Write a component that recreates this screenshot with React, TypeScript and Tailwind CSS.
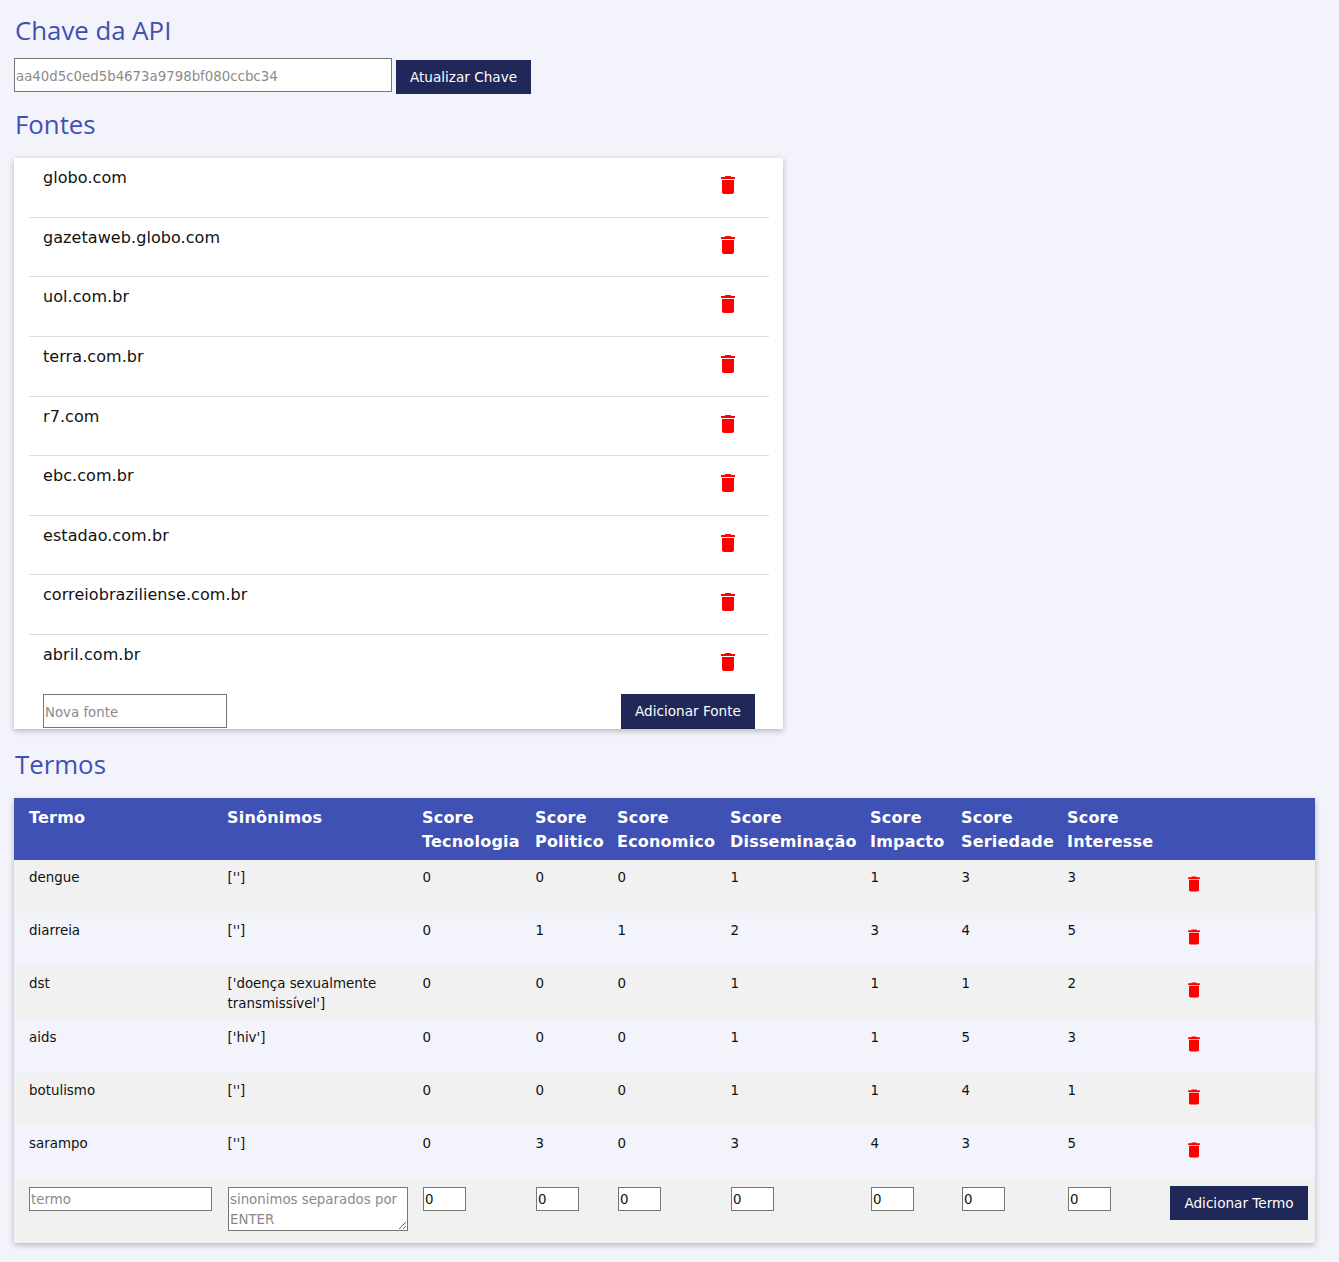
import { MdDelete } from "react-icons/md";

const fontes = [
  "globo.com",
  "gazetaweb.globo.com",
  "uol.com.br",
  "terra.com.br",
  "r7.com",
  "ebc.com.br",
  "estadao.com.br",
  "correiobraziliense.com.br",
  "abril.com.br",
];

const termos: [string, string, number, number, number, number, number, number, number][] = [
  ["dengue", "['']", 0, 0, 0, 1, 1, 3, 3],
  ["diarreia", "['']", 0, 1, 1, 2, 3, 4, 5],
  ["dst", "['doença sexualmente transmissível']", 0, 0, 0, 1, 1, 1, 2],
  ["aids", "['hiv']", 0, 0, 0, 1, 1, 5, 3],
  ["botulismo", "['']", 0, 0, 0, 1, 1, 4, 1],
  ["sarampo", "['']", 0, 3, 0, 3, 4, 3, 5],
];

const heads: [string, string][] = [
  ["Score", "Tecnologia"],
  ["Score", "Politico"],
  ["Score", "Economico"],
  ["Score", "Disseminação"],
  ["Score", "Impacto"],
  ["Score", "Seriedade"],
  ["Score", "Interesse"],
];

const body = "font-['Tahoma','DejaVu_Sans',sans-serif]";
const h2 = "font-['Open_Sans',sans-serif] text-[25.8px] leading-[36px] text-[#3f51b5]";
const field =
  "border border-[#767676] bg-white outline-none placeholder:text-[#8a8a8a] text-[#111] pl-px text-[13.33px]";
const btn = "bg-[#1f2858] text-white text-[13.6px]";

export default function App() {
  return (
    <div className={`${body} min-h-screen bg-[#f2f3fb] px-[14px] pt-[12px] pb-[18px] text-[#111]`}>
      <h2 className={`${h2} pl-px`}>Chave da API</h2>
      <div className="mt-[10px] flex items-start gap-1">
        <input className={`${field} h-[34px] w-[378px] pt-[2px]`} placeholder="aa40d5c0ed5b4673a9798bf080ccbc34" />
        <button className={`${btn} mt-[2px] h-[34px] w-[135px] pt-px`}>Atualizar Chave</button>
      </div>
      <h2 className={`${h2} mt-[12px] pl-px`}>Fontes</h2>
      <div className="mt-[16px] w-[769px] bg-white shadow-[0_2px_6px_rgba(0,0,0,0.25)]">
        <div className="pl-[15px] pr-[14px]">
          {fontes.map((f, i) => (
            <div
              key={f}
              className={`flex justify-between pl-[14px] pr-[29px] ${
                i < fontes.length - 1 ? "h-[59.65px] border-b border-[#dddddd]" : "h-[59.2px]"
              }`}
            >
              <span className="mt-[8px] text-[16px] leading-[24px] tracking-[0.07px]">{f}</span>
              <MdDelete className="mt-[15px] text-[#ff0000]" size={24} />
            </div>
          ))}
        </div>
        <div className="flex items-start justify-between pl-[29px] pr-[28px]">
          <input className={`${field} h-[34px] w-[184px] pt-[2px]`} placeholder="Nova fonte" />
          <button className={`${btn} h-[35px] w-[134px] pb-px`}>Adicionar Fonte</button>
        </div>
      </div>
      <h2 className={`${h2} mt-[17px] pl-px`}>Termos</h2>
      <table className="mt-[16px] w-[1301px] table-fixed border-collapse text-[13.4px] shadow-[0_2px_6px_rgba(0,0,0,0.25)]">
        <colgroup>
          <col className="w-[198px]" />
          <col className="w-[195px]" />
          <col className="w-[113px]" />
          <col className="w-[82px]" />
          <col className="w-[113px]" />
          <col className="w-[140px]" />
          <col className="w-[91px]" />
          <col className="w-[106px]" />
          <col className="w-[103px]" />
          <col className="w-[160px]" />
        </colgroup>
        <thead>
          <tr className="h-[62px] bg-[#3f51b5] text-left align-top text-[16px] leading-[24px] font-bold tracking-[0.2px] text-white">
            <th className="pl-[15px] pt-[8px]">Termo</th>
            <th className="pl-[15px] pt-[8px]">Sinônimos</th>
            {heads.map(([a, b]) => (
              <th key={b} className="whitespace-nowrap pl-[15px] pt-[8px] font-bold">
                {a}
                <br />
                {b}
              </th>
            ))}
            <th />
          </tr>
        </thead>
        <tbody>
          {termos.map((t, i) => (
            <tr
              key={t[0]}
              className={`align-top leading-[20px] ${i % 2 === 0 ? "bg-[#f1f1f1]" : "bg-[#f2f3fb]"} ${
                i === 2 ? "h-[54px]" : "h-[53px]"
              }`}
            >
              {t.map((v, j) => (
                <td key={j} className={`pt-[8px] ${j === 0 ? "pl-[15px]" : "pl-[15.5px]"}`}>
                  {v}
                </td>
              ))}
              <td className="pl-[29px]">
                <MdDelete className="mt-[14px] text-[#ff0000]" size={20} />
              </td>
            </tr>
          ))}
          <tr className="h-[64px] bg-[#f1f1f1] align-top">
            <td className="pl-[15px] pt-[8px]">
              <input className={`${field} block h-[24px] w-[183px]`} placeholder="termo" />
            </td>
            <td className="pl-[16px] pt-[8px]">
              <textarea
                className={`${field} block h-[44px] w-[180px] pl-[2px] pt-[2px] leading-[20px]`}
                placeholder="sinonimos separados por ENTER"
              />
            </td>
            {[0, 1, 2, 3, 4, 5, 6].map((k) => (
              <td key={k} className="pl-[16px] pt-[8px]">
                <input className={`${field} block h-[24px] w-[43px]`} defaultValue="0" />
              </td>
            ))}
            <td className="pt-[7px]">
              <button className={`${btn} ml-[15px] block h-[34px] w-[138px]`}>Adicionar Termo</button>
            </td>
          </tr>
        </tbody>
      </table>
    </div>
  );
}
